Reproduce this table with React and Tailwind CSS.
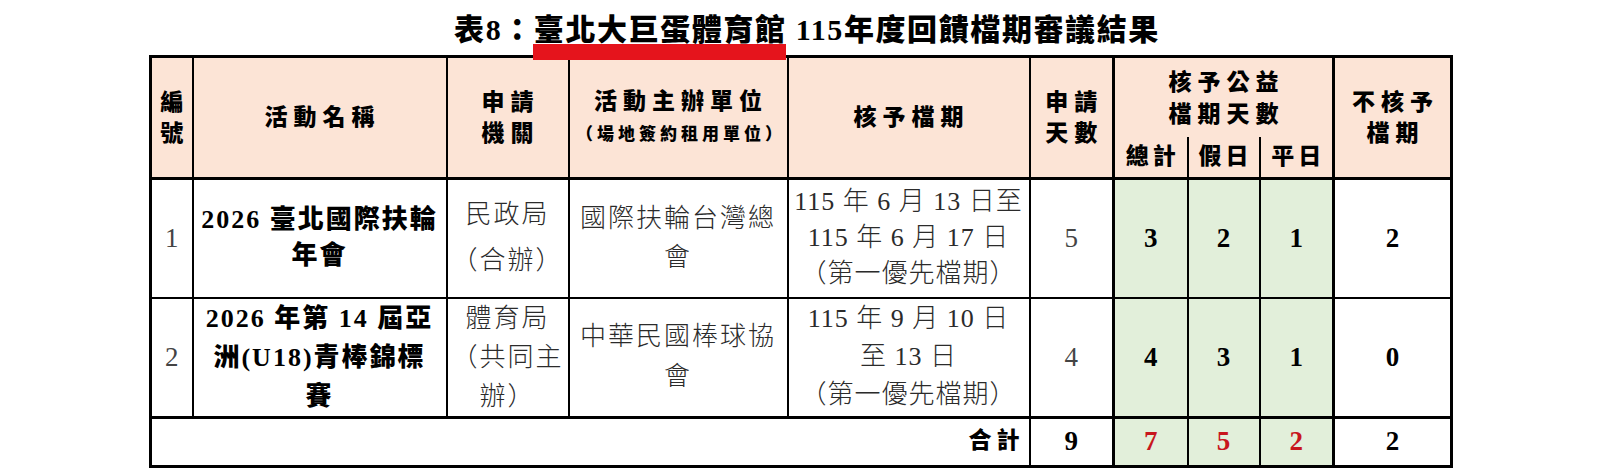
import React from 'react';

const hd = "bg-[#fce4d6] text-black font-black text-[23px] leading-[31px] tracking-[6px] pl-[6px] text-center align-middle border-2 border-black border-b-[3px]";
const td = "bg-white text-center align-middle border-2 border-black p-0";
const green = "bg-[#e2efda] text-center align-middle border-2 border-black p-0";
const reg = "text-[26px] font-light text-[#2b2b2b] tracking-[2px] leading-[39px]";
const num = "text-[27px] font-bold text-black";
const numReg = "text-[27px] font-normal text-[#444]";

function App() {
  return (
    <div className="relative w-[1600px] h-[476px] bg-white overflow-hidden font-['Liberation_Serif','Noto_Sans_CJK_TC',serif]">
      {/* title */}
      <div className="h-[55px] flex items-center justify-center pl-[14px] pt-[4px] text-[30px] font-black tracking-[1.6px] leading-none whitespace-nowrap text-black">
        <span>表8：臺北大巨蛋體育館 115年度回饋檔期審議結果</span>
      </div>
      <div className="absolute left-[533px] top-[44px] w-[253px] h-[16px] bg-[#e5141c] z-10" />

      <table className="ml-[149px] w-[1301px] table-fixed border-collapse border-[3px] border-black">
        <colgroup>
          <col className="w-[42px]" />
          <col className="w-[254px]" />
          <col className="w-[122px]" />
          <col className="w-[219px]" />
          <col className="w-[242px]" />
          <col className="w-[84px]" />
          <col className="w-[74px]" />
          <col className="w-[72px]" />
          <col className="w-[74px]" />
          <col className="w-[118px]" />
        </colgroup>
        <thead>
          <tr className="h-[80px]">
            <th rowSpan={2} className={hd}>編<br />號</th>
            <th rowSpan={2} className={hd}>活動名稱</th>
            <th rowSpan={2} className={hd}>申請<br />機關</th>
            <th rowSpan={2} className={hd}>
              活動主辦單位<br />
              <span className="text-[17px] tracking-[4px]">（場地簽約租用單位）</span>
            </th>
            <th rowSpan={2} className={hd}>核予檔期</th>
            <th rowSpan={2} className={hd}>申請<br />天數</th>
            <th colSpan={3} className="bg-[#fce4d6] text-black font-black text-[23px] leading-[32px] tracking-[6px] pl-[6px] text-center align-middle border-2 border-black border-x-[3px] border-b-0 pt-[4px]">
              核予公益<br />檔期天數
            </th>
            <th rowSpan={2} className="bg-[#fce4d6] text-black font-black text-[23px] leading-[31px] tracking-[6px] pl-[6px] text-center align-middle border-2 border-black border-l-[3px] border-b-[3px]">
              不核予<br />檔期
            </th>
          </tr>
          <tr className="h-[42px]">
            <th className="bg-[#fce4d6] text-black font-black text-[23px] leading-[30px] tracking-[4px] pl-[4px] text-center align-middle border-2 border-black border-t-0 border-l-[3px] border-b-[3px]">總計</th>
            <th className="bg-[#fce4d6] text-black font-black text-[23px] leading-[30px] tracking-[4px] pl-[4px] text-center align-middle border-2 border-black border-t-0 border-b-[3px]">假日</th>
            <th className="bg-[#fce4d6] text-black font-black text-[23px] leading-[30px] tracking-[4px] pl-[4px] text-center align-middle border-2 border-black border-t-0 border-r-[3px] border-b-[3px]">平日</th>
          </tr>
        </thead>
        <tbody>
          <tr className="h-[119px]">
            <td className={td}><span className={numReg}>1</span></td>
            <td className={td}>
              <div className="text-[26px] font-black text-black tracking-[2px] leading-[36px] whitespace-nowrap">
                2026 臺北國際扶輪<br />年會
              </div>
            </td>
            <td className={td}>
              <div className="text-[26px] font-light text-[#2b2b2b] tracking-[2px] leading-[46px]">
                民政局<br />（合辦）
              </div>
            </td>
            <td className={td}>
              <div className={reg}>國際扶輪台灣總<br />會</div>
            </td>
            <td className={td}>
              <div className="text-[26px] font-light text-[#2b2b2b] tracking-[1px] leading-[36px] whitespace-nowrap">
                115 年 6 月 13 日至<br />115 年 6 月 17 日<br />（第一優先檔期）
              </div>
            </td>
            <td className={td}><span className={numReg}>5</span></td>
            <td className={`${green} border-l-[3px]`}><span className={num}>3</span></td>
            <td className={green}><span className={num}>2</span></td>
            <td className={`${green} border-r-[3px]`}><span className={num}>1</span></td>
            <td className={td}><span className={num}>2</span></td>
          </tr>
          <tr className="h-[119px]">
            <td className={td}><span className={numReg}>2</span></td>
            <td className={td}>
              <div className="text-[26px] font-black text-black tracking-[2px] leading-[39px] whitespace-nowrap">
                2026 年第 14 屆亞<br />洲(U18)青棒錦標<br />賽
              </div>
            </td>
            <td className={td}>
              <div className={reg}>體育局<br />（共同主<br />辦）</div>
            </td>
            <td className={td}>
              <div className="text-[26px] font-light text-[#2b2b2b] tracking-[2px] leading-[40px]">中華民國棒球協<br />會</div>
            </td>
            <td className={td}>
              <div className="text-[26px] font-light text-[#2b2b2b] tracking-[1px] leading-[38px] whitespace-nowrap">
                115 年 9 月 10 日<br />至 13 日<br />（第一優先檔期）
              </div>
            </td>
            <td className={td}><span className={numReg}>4</span></td>
            <td className={`${green} border-l-[3px]`}><span className={num}>4</span></td>
            <td className={green}><span className={num}>3</span></td>
            <td className={`${green} border-r-[3px]`}><span className={num}>1</span></td>
            <td className={td}><span className={num}>0</span></td>
          </tr>
          <tr className="h-[49px]">
            <td colSpan={5} className="bg-white text-right align-middle border-2 border-black border-t-[3px] pr-[4px]">
              <span className="text-[23px] font-black tracking-[5px] text-black">合計</span>
            </td>
            <td className={`${td} border-t-[3px]`}><span className={num}>9</span></td>
            <td className={`${green} border-t-[3px] border-l-[3px]`}><span className="text-[27px] font-bold text-[#c8161d]">7</span></td>
            <td className={`${green} border-t-[3px]`}><span className="text-[27px] font-bold text-[#c8161d]">5</span></td>
            <td className={`${green} border-t-[3px] border-r-[3px]`}><span className="text-[27px] font-bold text-[#c8161d]">2</span></td>
            <td className={`${td} border-t-[3px]`}><span className={num}>2</span></td>
          </tr>
        </tbody>
      </table>
    </div>
  );
}

export default App;
